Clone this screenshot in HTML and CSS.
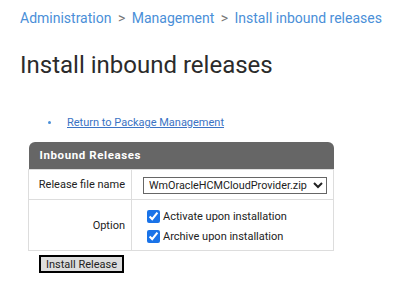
FILE: index.html
```html
<!DOCTYPE html>
<html lang="en">
<head>
   <meta charset="UTF-8">
   <title>Install inbound releases</title>
   <link rel="stylesheet" href="styles.css">
</head>
<body>

   <!-- Breadcrumb -->
   <div class="breadcrumb">
       <a href="#">Administration</a>
       <span class="sep">&gt;</span>
       <a href="#">Management</a>
       <span class="sep">&gt;</span>
       <a href="#">Install inbound releases</a>
   </div>

   <h1>Install inbound releases</h1>

   <ul class="links">
       <li><a href="#">Return to Package Management</a></li>
   </ul>

   <form>
       <table class="form-table">
           <thead>
               <tr>
                   <th colspan="2">Inbound Releases</th>
               </tr>
           </thead>
           <tbody>
               <tr>
                   <td class="label">Release file name</td>
                   <td class="select-cell">
                       <select class="file-select">
                           <option>WmOracleHCMCloudProvider.zip</option>
                       </select>
                   </td>
               </tr>
               <tr>
                   <td class="label">Option</td>
                   <td class="options">
                       <label><input type="checkbox" checked> Activate upon installation</label>
                       <label><input type="checkbox" checked> Archive upon installation</label>
                   </td>
               </tr>
           </tbody>
       </table>
       <button type="button" class="install-btn">Install Release</button>
   </form>

</body>
</html>
```

FILE: styles.css
```css
body {
    font-family: Roboto, "Liberation Sans", sans-serif;
    margin: 0;
    padding: 10px 20px;
    color: #333;
    background-color: #fff;
}
.breadcrumb {
    font-size: 14px;
    color: #4a8fd8;
    line-height: 17px;
    white-space: nowrap;
}
.breadcrumb a {
    color: #4a8fd8;
    text-decoration: none;
}
.breadcrumb .sep {
    color: #777;
    margin: 0 3px;
}
h1 {
    font-size: 24px;
    font-weight: 400;
    color: #2b2b2b;
    margin: 24px 0 0 0;
    line-height: 28px;
}
.links {
    margin: 37px 0 0 0;
    padding-left: 28px;
    font-size: 11px;
    line-height: 14px;
    list-style: none;
}
.links li::before {
    content: "";
    display: inline-block;
    width: 3px;
    height: 3px;
    border-radius: 50%;
    background-color: #4a8fd8;
    margin: 0 16px 2px 0;
    vertical-align: middle;
}
.links a {
    color: #3b73c4;
}
.form-table {
    margin: 12px 0 0 8px;
    width: 306px;
    border-collapse: collapse;
    font-size: 11px;
}
.form-table th {
    background-color: #666;
    color: #fff;
    text-align: left;
    font-size: 11.5px;
    font-weight: 700;
    letter-spacing: 0.6px;
    height: 27px;
    line-height: 27px;
    padding: 0 11px;
    border-radius: 6px 6px 0 0;
}
.form-table td {
    border: 1px solid #ddd;
    padding: 4px 6px;
}
.form-table .label {
    text-align: right;
    width: 90px;
    white-space: nowrap;
    color: #222;
}
.form-table .select-cell {
    padding: 7px 6px 5px 6px;
}
.file-select {
    display: block;
    font-family: Roboto, "Liberation Sans", sans-serif;
    font-size: 10.8px;
    width: 184px;
    height: 17px;
    margin: 0 0 0 5px;
    border: 1px solid #666;
    border-radius: 0;
    background-color: #fff;
    color: #222;
    padding: 0 1px;
}
.form-table .options {
    padding: 6px 6px 4px 14px;
}
.options label {
    display: flex;
    align-items: center;
    height: 20px;
    color: #222;
}
.options input {
    margin: 0 3px 0 1px;
    width: 13px;
    height: 13px;
    accent-color: #1a73e8;
}
.install-btn {
    margin: 4px 0 0 19px;
    font-family: Roboto, "Liberation Sans", sans-serif;
    font-size: 11px;
    background-color: #ddd;
    color: #222;
    border: 2px solid #000;
    padding: 0 5px;
    height: 18px;
    line-height: 13px;
}
```
